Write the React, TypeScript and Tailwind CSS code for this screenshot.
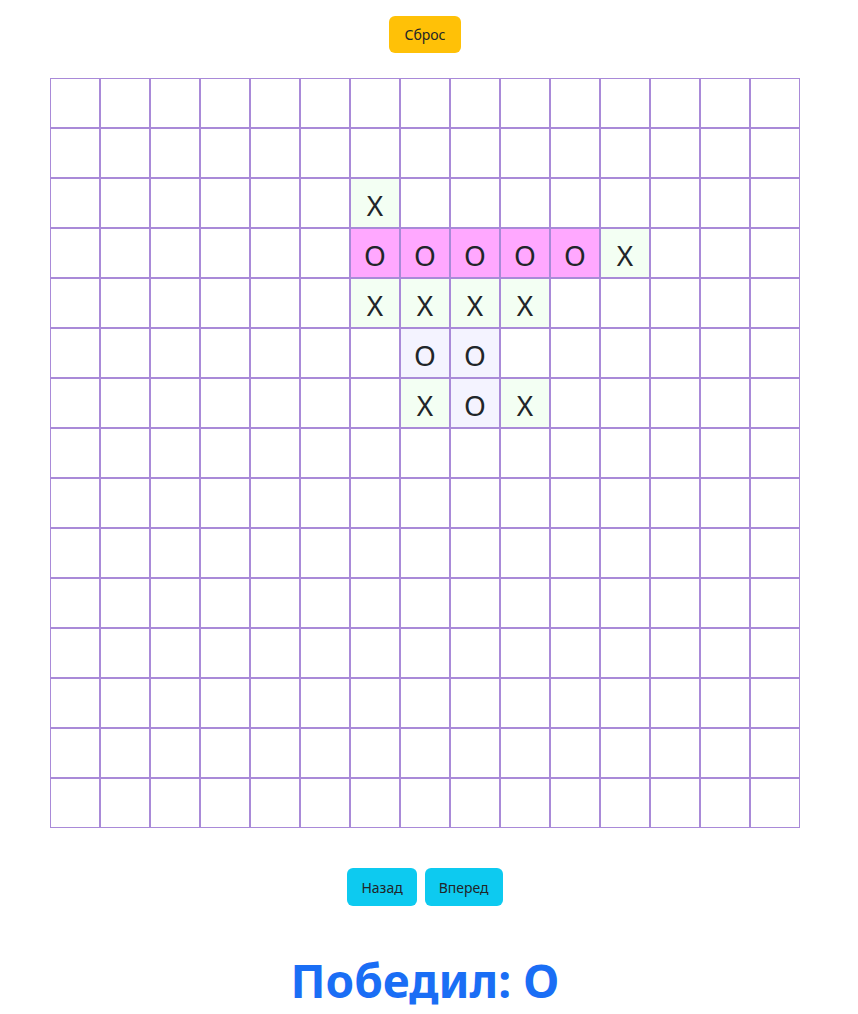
import React from 'react';

type Mark = 'X' | 'O' | null;

const SIZE = 15;

// board state: row -> col -> mark
const moves: [number, number, Mark][] = [
  [2, 6, 'X'],
  [3, 6, 'O'], [3, 7, 'O'], [3, 8, 'O'], [3, 9, 'O'], [3, 10, 'O'], [3, 11, 'X'],
  [4, 6, 'X'], [4, 7, 'X'], [4, 8, 'X'], [4, 9, 'X'],
  [5, 7, 'O'], [5, 8, 'O'],
  [6, 7, 'X'], [6, 8, 'O'], [6, 9, 'X'],
];

const winLine = new Set(['3-6', '3-7', '3-8', '3-9', '3-10']);

const board: Mark[][] = Array.from({ length: SIZE }, () => Array(SIZE).fill(null));
moves.forEach(([r, c, m]) => {
  board[r][c] = m;
});

function Cell({ value, win }: { value: Mark; win: boolean }) {
  let bg = 'bg-white';
  if (win) bg = 'bg-[#ffa8ff]';
  else if (value === 'X') bg = 'bg-[#f3fff3]';
  else if (value === 'O') bg = 'bg-[#f4f3ff]';

  return (
    <div
      className={`w-[50px] h-[50px] border border-[#a98ad8] flex items-center justify-center text-[28px] leading-none text-[#212529] pt-[3px] ${bg}`}
    >
      {value}
    </div>
  );
}

export default function App() {
  return (
    <div className="w-[850px] flex flex-col items-center pt-4 font-['Noto_Sans','Open_Sans',sans-serif]">
      <button className="bg-[#ffc107] text-[#212529] text-[14px] px-[15px] h-[37px] rounded-md">
        Сброс
      </button>

      <div className="mt-[25px] grid grid-cols-[repeat(15,50px)]">
        {board.map((row, r) =>
          row.map((v, c) => (
            <Cell key={`${r}-${c}`} value={v} win={winLine.has(`${r}-${c}`)} />
          ))
        )}
      </div>

      <div className="mt-10 flex gap-2">
        <button className="bg-[#0dcaf0] text-[#212529] text-[14px] px-[14px] h-[38px] rounded-md">
          Назад
        </button>
        <button className="bg-[#0dcaf0] text-[#212529] text-[14px] px-[14px] h-[38px] rounded-md">
          Вперед
        </button>
      </div>

      <h1 className="mt-[47px] text-[46px] font-bold leading-[1.2] text-[#1a6ef5]">Победил: O</h1>
    </div>
  );
}
